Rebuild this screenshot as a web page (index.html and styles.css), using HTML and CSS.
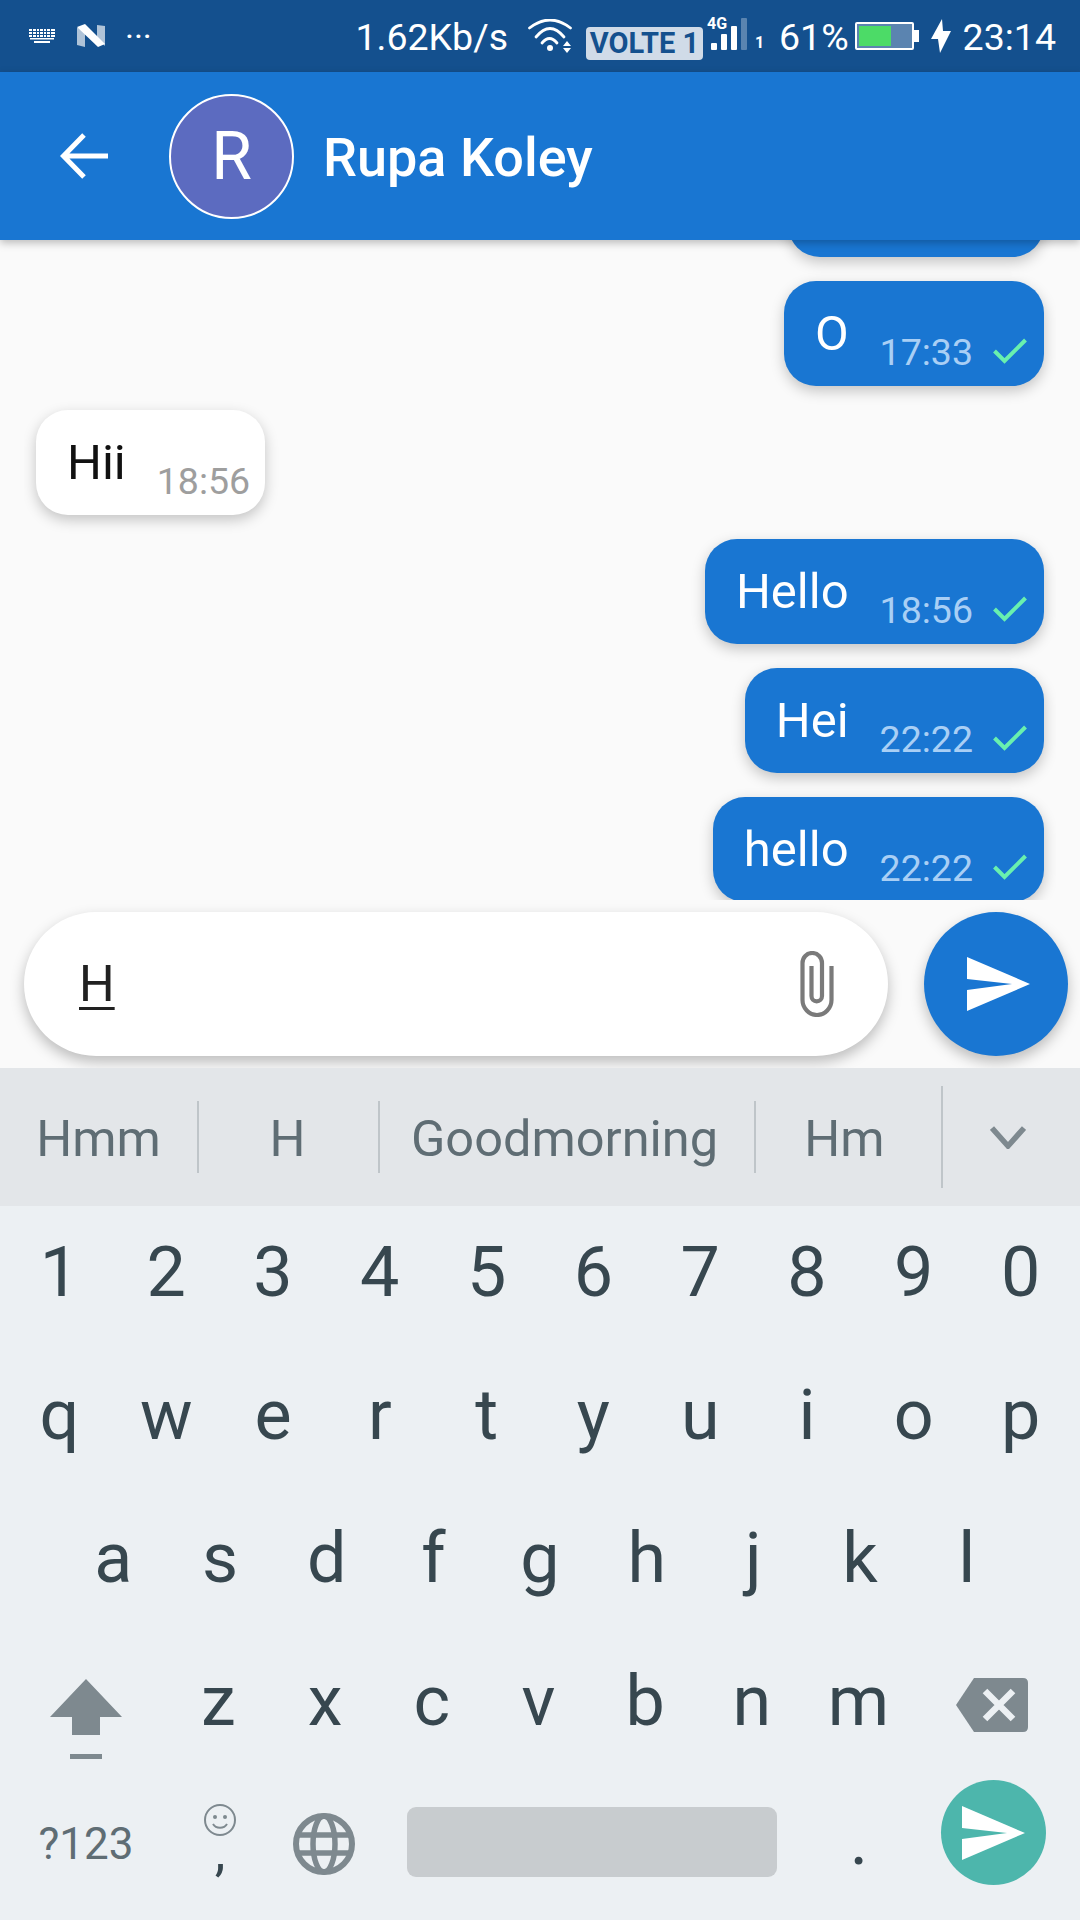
FILE: index.html
```html
<!DOCTYPE html>
<html lang="en">
<head>
<meta charset="UTF-8">
<meta name="viewport" content="width=device-width, initial-scale=1.0">
<title>Rupa Koley</title>
<link rel="stylesheet" href="styles.css">
</head>
<body>

<div class="status-bar">
    <div class="status-left">
        <svg class="ic-keyboard" viewBox="0 0 26 14"><path fill="#fff" d="M0 0h3v2H0zM4 0h3v2H4zM8 0h2v2H8zM11 0h3v2h-3zM15 0h2v2h-2zM18 0h3v2h-3zM22 0h4v2h-4zM0 3h3v2H0zM4 3h3v2H4zM8 3h2v2H8zM11 3h3v2h-3zM15 3h2v2h-2zM18 3h3v2h-3zM22 3h4v2h-4zM0 6h3v2H0zM4 6h3v2H4zM8 6h2v2H8zM11 6h3v2h-3zM15 6h2v2h-2zM18 6h3v2h-3zM22 6h4v2h-4zM1 9h24v1.5H1zM5 12h16v2H5z"/></svg>
        <svg class="ic-n" viewBox="0 0 28 24"><path fill="#afc3d8" d="M0 4l8-3v22l-8-2zM20 1l8 1v20l-8-8z"/><path fill="#fff" d="M0 3l8-3 20 20-7 3z"/></svg>
        <span class="dots">&middot;&middot;&middot;</span>
    </div>
    <div class="status-right">
        <span class="speed">1.62Kb/s</span>
        <svg class="ic-wifi" viewBox="0 0 44 34"><g fill="none" stroke="#fff" stroke-width="2.8" stroke-linecap="round"><path d="M1.5 9Q22-7 42.5 9"/><path d="M8 18Q22 1 36 18"/><path d="M14 24Q21.5 15 29 24"/></g><circle cx="22" cy="29" r="3" fill="#fff"/><path fill="#fff" d="M35 27l4-5 4 5zM35 29h8l-4 5z"/></svg>
        <span class="volte">VOLTE 1</span>
        <div class="signal">
            <span class="net">4G</span>
            <i class="bar b1"></i><i class="bar b2"></i><i class="bar b3"></i><i class="bar b4"></i>
            <span class="sim">1</span>
        </div>
        <span class="batt-pct">61%</span>
        <div class="battery"><div class="battery-fill"></div></div>
        <svg class="ic-bolt" viewBox="0 0 20 34"><path fill="#fff" d="M11 0L0 20h7L9 34 20 12h-8z"/></svg>
        <span class="clock">23:14</span>
    </div>
</div>

<div class="app-bar">
    <svg class="ic-back" viewBox="0 0 48 48"><path fill="none" stroke="#fff" stroke-width="5" d="M48 24H3.5M24 3L3.5 24 24 45"/></svg>
    <div class="avatar">R</div>
    <div class="contact">Rupa Koley</div>
</div>

<div class="chat">
    <div class="msg out clipped"></div>
    <div class="msg out">
        <span class="msg-text">O</span>
        <span class="msg-time">17:33</span>
        <svg class="ic-check" viewBox="0 0 34 26"><path fill="none" stroke="#69f0ae" stroke-width="4" d="M1.5 13l10 10L32.5 2"/></svg>
    </div>
    <div class="msg in">
        <span class="msg-text">Hii</span>
        <span class="msg-time">18:56</span>
    </div>
    <div class="msg out">
        <span class="msg-text">Hello</span>
        <span class="msg-time">18:56</span>
        <svg class="ic-check" viewBox="0 0 34 26"><path fill="none" stroke="#69f0ae" stroke-width="4" d="M1.5 13l10 10L32.5 2"/></svg>
    </div>
    <div class="msg out">
        <span class="msg-text">Hei</span>
        <span class="msg-time">22:22</span>
        <svg class="ic-check" viewBox="0 0 34 26"><path fill="none" stroke="#69f0ae" stroke-width="4" d="M1.5 13l10 10L32.5 2"/></svg>
    </div>
    <div class="msg out">
        <span class="msg-text">hello</span>
        <span class="msg-time">22:22</span>
        <svg class="ic-check" viewBox="0 0 34 26"><path fill="none" stroke="#69f0ae" stroke-width="4" d="M1.5 13l10 10L32.5 2"/></svg>
    </div>
</div>

<div class="composer">
    <div class="input-pill">
        <span class="typed">H</span>
        <svg class="ic-clip" viewBox="0 0 34 66"><path fill="none" stroke="#7a7a7a" stroke-width="4.2" d="M11.5 15v30c0 3 2.2 5.3 5.2 5.3s5.3-2.3 5.3-5.3V12C22 6.5 17.7 2 12.2 2S2.5 6.5 2.5 12v37c0 8 6.5 15 14.5 15s14.5-7 14.5-15V15"/></svg>
    </div>
    <div class="send-btn">
        <svg class="ic-send" viewBox="0 0 63 54"><path fill="#fff" d="M0 0l63 27L0 54V33l45-6-45-5z"/></svg>
    </div>
</div>

<div class="keyboard">
    <div class="suggestions">
        <div class="sug s1">Hmm</div>
        <div class="sug s2">H</div>
        <div class="sug s3">Goodmorning</div>
        <div class="sug s4">Hm</div>
        <div class="sug-more">
            <svg class="ic-chevron" viewBox="0 0 36 24"><path fill="none" stroke="#7e898f" stroke-width="5.5" d="M2 3l16 18L34 3"/></svg>
        </div>
    </div>

    <div class="key-row first-row">
        <div class="key">1</div><div class="key">2</div><div class="key">3</div><div class="key">4</div><div class="key">5</div>
        <div class="key">6</div><div class="key">7</div><div class="key">8</div><div class="key">9</div><div class="key">0</div>
    </div>
    <div class="key-row">
        <div class="key">q</div><div class="key">w</div><div class="key">e</div><div class="key">r</div><div class="key">t</div>
        <div class="key">y</div><div class="key">u</div><div class="key">i</div><div class="key">o</div><div class="key">p</div>
    </div>
    <div class="key-row row-a">
        <div class="key">a</div><div class="key">s</div><div class="key">d</div><div class="key">f</div><div class="key">g</div>
        <div class="key">h</div><div class="key">j</div><div class="key">k</div><div class="key">l</div>
    </div>
    <div class="key-row row-z">
        <div class="key wide">
            <svg class="ic-shift" viewBox="0 0 72 80"><path fill="#7e898f" d="M36 0l36 38H50v18H22V38H0zM20 75h32v5H20z"/></svg>
        </div>
        <div class="key">z</div><div class="key">x</div><div class="key">c</div><div class="key">v</div>
        <div class="key">b</div><div class="key">n</div><div class="key">m</div>
        <div class="key wide">
            <svg class="ic-backspace" viewBox="0 0 72 54"><path fill="#7e898f" d="M18 0h49q5 0 5 5v44q0 5-5 5H18L0 27z"/><path fill="none" stroke="#ecf0f3" stroke-width="6.5" d="M29 13l28 28M57 13L29 41"/></svg>
        </div>
    </div>
    <div class="key-row row-bottom">
        <div class="key sym">?123</div>
        <div class="key comma">
            <svg class="ic-smile" viewBox="0 0 32 32"><g fill="none" stroke="#7e898f" stroke-width="2"><circle cx="16" cy="16" r="15"/><path d="M9 20c3 5 11 5 14 0"/></g><circle cx="11" cy="13" r="2" fill="#7e898f"/><circle cx="21" cy="13" r="2" fill="#7e898f"/></svg>
            <span class="comma-char">,</span>
        </div>
        <div class="key globe">
            <svg class="ic-globe" viewBox="0 0 62 62"><circle cx="31" cy="31" r="28" fill="none" stroke="#7e898f" stroke-width="6"/><g fill="none" stroke="#7e898f" stroke-width="5.5"><ellipse cx="31" cy="31" rx="11" ry="28"/><path d="M5 22h52M5 40h52"/></g></svg>
        </div>
        <div class="spacebar"></div>
        <div class="key period">.</div>
        <div class="key enter">
            <div class="enter-btn">
                <svg class="ic-enter" viewBox="0 0 63 54"><path fill="#fff" d="M0 0l63 27L0 54V33l45-6-45-5z"/></svg>
            </div>
        </div>
    </div>
</div>

</body>
</html>
```

FILE: styles.css
```css
* {
    box-sizing: border-box;
}
html, body {
    margin: 0;
    padding: 0;
}
body {
    width: 1080px;
    height: 1920px;
    overflow: hidden;
    background-color: #fafafa;
    font-family: Roboto, "Noto Sans", sans-serif;
    display: flex;
    flex-direction: column;
}

/* status bar */
.status-bar {
    height: 72px;
    background-color: #14508e;
    color: #fff;
    display: flex;
    align-items: center;
    justify-content: space-between;
    padding: 0 24px 0 29px;
    flex-shrink: 0;
}
.status-left, .status-right {
    display: flex;
    align-items: center;
}
.ic-keyboard {
    width: 26px;
    height: 14px;
    margin-right: 22px;
}
.ic-n {
    width: 28px;
    height: 24px;
    margin-right: 20px;
}
.dots {
    font-size: 34px;
    line-height: 1;
}
.speed, .batt-pct, .clock {
    font-size: 37.5px;
    line-height: 44px;
    margin-top: 2px;
}
.ic-wifi {
    width: 44px;
    height: 34px;
    margin: 0 14px 0 20px;
}
.volte {
    width: 117px;
    height: 33px;
    background-color: #d0dbe8;
    color: #14508e;
    font-size: 29px;
    font-weight: 700;
    line-height: 33px;
    text-align: center;
    border-radius: 4px;
    margin-top: 15px;
    white-space: nowrap;
}
.signal {
    width: 76px;
    height: 44px;
    position: relative;
}
.signal .net {
    position: absolute;
    left: 4px;
    top: 0;
    font-size: 16px;
    font-weight: 700;
}
.signal .bar {
    position: absolute;
    bottom: 8px;
    width: 6px;
    background-color: #fff;
    border-radius: 1px;
}
.signal .b1 { left: 8px; height: 7px; }
.signal .b2 { left: 18px; height: 16px; }
.signal .b3 { left: 28px; height: 24px; }
.signal .b4 { left: 38px; height: 32px; opacity: 0.3; }
.signal .sim {
    position: absolute;
    left: 52px;
    bottom: 6px;
    font-size: 16px;
    font-weight: 700;
}
.battery {
    width: 59px;
    height: 28px;
    border: 2px solid #fff;
    border-radius: 2px;
    background-color: #5b84b0;
    margin-left: 6px;
    padding: 2px;
    position: relative;
}
.battery:after {
    content: "";
    position: absolute;
    right: -7px;
    top: 6px;
    width: 5px;
    height: 12px;
    background-color: #fff;
}
.battery-fill {
    width: 32px;
    height: 100%;
    background-color: #4cdb67;
}
.ic-bolt {
    width: 20px;
    height: 34px;
    margin: 0 12px 0 17px;
}

/* app bar */
.app-bar {
    height: 168px;
    background-color: #1976d2;
    display: flex;
    align-items: center;
    padding-left: 60px;
    box-shadow: 0 3px 8px rgba(0, 0, 0, 0.25);
    position: relative;
    z-index: 2;
    flex-shrink: 0;
}
.ic-back {
    width: 48px;
    height: 48px;
    margin-right: 61px;
}
.avatar {
    width: 125px;
    height: 125px;
    border-radius: 50%;
    border: 2.5px solid #fff;
    background-color: #5c6bc0;
    color: #fff;
    font-size: 66px;
    display: flex;
    align-items: center;
    justify-content: center;
    margin-right: 29px;
}
.contact {
    color: #fff;
    font-size: 54px;
    font-weight: 500;
    margin-top: 2px;
}

/* messages */
.chat {
    height: 660px;
    margin: 0 24px;
    padding: 0 12px;
    overflow: hidden;
    display: flex;
    flex-direction: column;
    justify-content: flex-end;
    gap: 24px;
    flex-shrink: 0;
}
.msg {
    height: 105px;
    border-radius: 32px;
    display: flex;
    align-items: flex-end;
    padding: 0 17px 13px 31px;
    flex-shrink: 0;
    box-shadow: 0 5px 14px rgba(0, 0, 0, 0.22);
}
.msg:last-child {
    margin-bottom: -2px;
}
.msg.out {
    align-self: flex-end;
    background-color: #1976d2;
    color: #fff;
}
.msg.in {
    align-self: flex-start;
    background-color: #fff;
    color: #111;
    padding-right: 15px;
}
.msg.clipped {
    width: 256px;
}
.msg-text {
    font-size: 49px;
    line-height: 54px;
    margin: 0 31px 12px 0;
}
.msg-time {
    font-size: 37.5px;
    line-height: 42px;
    color: #a9cff5;
    margin-right: 20px;
}
.msg.in .msg-time {
    color: #9e9e9e;
    margin-right: 0;
}
.ic-check {
    width: 34px;
    height: 26px;
    margin-bottom: 9px;
}

/* input row */
.composer {
    display: flex;
    gap: 36px;
    height: 168px;
    padding: 12px 12px 12px 24px;
    flex-shrink: 0;
}
.input-pill {
    width: 864px;
    height: 144px;
    background-color: #fff;
    border-radius: 72px;
    box-shadow: 0 6px 14px rgba(0, 0, 0, 0.25);
    display: flex;
    align-items: center;
    justify-content: space-between;
    padding: 0 54px 0 55px;
}
.typed {
    font-size: 50px;
    color: #212121;
    text-decoration: underline;
    text-decoration-thickness: 3px;
    text-underline-offset: 6px;
}
.ic-clip {
    width: 34px;
    height: 66px;
}
.send-btn {
    width: 144px;
    height: 144px;
    border-radius: 50%;
    background-color: #1976d2;
    box-shadow: 0 6px 14px rgba(0, 0, 0, 0.25);
    display: flex;
    align-items: center;
    justify-content: center;
    padding-left: 4px;
}
.ic-send {
    width: 63px;
    height: 54px;
}

/* keyboard */
.keyboard {
    flex: 1;
    background-color: #ecf0f3;
    display: flex;
    flex-direction: column;
    position: relative;
    overflow: hidden;
}
.suggestions {
    height: 138px;
    background-color: #e3e6e9;
    display: flex;
    align-items: center;
    flex-shrink: 0;
    color: #5f6d74;
    font-size: 50.5px;
    position: relative;
    z-index: 1;
}
.sug {
    height: 72px;
    padding-top: 3px;
    display: flex;
    align-items: center;
    justify-content: center;
    border-right: 2px solid #bfc5c9;
}
.s1 { width: 199px; }
.s2 { width: 181px; padding-right: 2px; }
.s3 { width: 376px; padding-right: 5px; }
.s4 { width: 185px; padding-right: 8px; border-right: none; }
.sug-more {
    flex: 1;
    height: 102px;
    display: flex;
    align-items: center;
    justify-content: center;
    border-left: 2px solid #bfc5c9;
    padding-right: 8px;
}
.ic-chevron {
    width: 36px;
    height: 24px;
}
.key-row {
    height: 143px;
    padding: 0 6px;
    display: flex;
    align-items: center;
    color: #37474f;
    font-size: 70px;
    flex-shrink: 0;
}
.first-row {
    margin-top: -6px;
}
.row-a {
    padding: 0 60px;
}
.key {
    flex: 1;
    height: 100%;
    display: flex;
    align-items: center;
    justify-content: center;
}
.row-z {
    padding: 0;
}
.row-z .key {
    flex: none;
    width: 106.7px;
}
.row-z .key.wide {
    flex: 1;
}
.row-z .key.wide:first-child {
    flex: none;
    width: 165px;
}
.ic-shift {
    width: 72px;
    height: 80px;
    margin: 36px 0 0 7px;
}
.ic-backspace {
    width: 72px;
    height: 54px;
    margin: 8px 7px 0 0;
}
.row-bottom {
    padding: 0;
}
.row-bottom .key {
    flex: none;
}
.key.sym {
    width: 172px;
    font-size: 44px;
    color: #5f6d74;
}
.key.comma {
    width: 96px;
    flex-direction: column;
    padding-bottom: 16px;
}
.ic-smile {
    width: 32px;
    height: 32px;
}
.comma-char {
    font-size: 54px;
    line-height: 32px;
}
.key.globe {
    width: 112px;
}
.ic-globe {
    width: 62px;
    height: 62px;
}
.spacebar {
    width: 370px;
    height: 70px;
    margin: 0 0 3px 27px;
    background-color: #c8cccf;
    border-radius: 9px;
}
.key.period {
    width: 164px;
    padding-bottom: 8px;
}
.key.enter {
    flex: 1;
    justify-content: flex-start;
    padding-bottom: 22px;
}
.enter-btn {
    width: 105px;
    height: 105px;
    border-radius: 50%;
    background-color: #4db6ac;
    display: flex;
    align-items: center;
    justify-content: center;
}
.ic-enter {
    width: 63px;
    height: 54px;
}
```
